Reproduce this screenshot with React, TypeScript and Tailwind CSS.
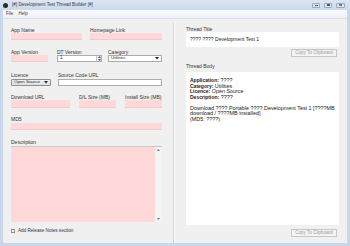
import React from "react";

const Label = ({ children, className = "" }: { children: React.ReactNode; className?: string }) => (
  <div className={`h-[6px] text-[5px] leading-[6px] text-[#333] whitespace-nowrap ${className}`}>{children}</div>
);

const Pink = ({ w, h = "h-[7px]" }: { w: string; h?: string }) => (
  <div className={`${w} ${h} bg-[#ffd9d9] border-b border-[#f3caca]`} />
);

const Arrow = () => (
  <svg width="4" height="3" viewBox="0 0 4 3" className="shrink-0">
    <path d="M0 0 L4 0 L2 2.5 Z" fill="#222" />
  </svg>
);

const CopyBtn = () => (
  <div className="w-[46px] h-[8px] border border-[#c6c6c6] bg-[#f4f4f4] flex items-center justify-center text-[4.6px] leading-none text-[#9a9a9a] whitespace-nowrap">
    Copy To Clipboard
  </div>
);

export default function App() {
  return (
    <div
      className="w-[350px] h-[246px] flex flex-col bg-[#c8d7eb] overflow-hidden"
      style={{ fontFamily: '"Liberation Sans", Arial, sans-serif' }}
    >
      {/* Title bar */}
      <div className="h-[10px] flex items-center px-[3px] bg-gradient-to-b from-[#dde7f4] to-[#cbd9ec]">
        <div className="w-[5px] h-[5px] rounded-full bg-[#2a2a2a] mr-[4px]" />
        <div className="text-[4.6px] leading-none text-[#3a3a3a] whitespace-nowrap">
          [#] Development Test Thread Builder [#]
        </div>
        <div className="ml-auto flex items-center gap-[4px] mr-[2px]">
          <div className="w-[8px] h-[5px] rounded-[1px] border border-[#9aa8bb] bg-[#dfe6f0] flex items-end justify-center pb-[1px]">
            <div className="w-[3px] h-[1px] bg-[#555]" />
          </div>
          <div className="w-[8px] h-[5px] rounded-[1px] border border-[#9aa8bb] bg-[#dfe6f0] flex items-center justify-center">
            <div className="w-[3px] h-[2px] border border-[#555]" />
          </div>
          <div className="w-[9px] h-[5px] rounded-[1px] border border-[#9aa8bb] bg-[#dfe6f0] flex items-center justify-center">
            <div className="w-[3px] h-[2px] border border-[#777]" />
          </div>
        </div>
      </div>

      <div className="flex-1 flex flex-col px-[3px] pb-[3px] min-h-0">
        {/* Menu */}
        <div className="h-[9px] flex items-center gap-[5px] pl-[3px] bg-gradient-to-b from-[#f8fafd] to-[#eef2f8] border-b border-[#d8dfe9] text-[4.6px] text-[#444]">
          <span>File</span>
          <span>Help</span>
        </div>

        {/* Main */}
        <div className="flex-1 flex bg-[#f0f0f0] min-h-0">
          {/* Left panel */}
          <div className="w-[170px] flex flex-col pl-[8px] pr-[11px] pt-[8px] pb-[6px]">
            <div className="flex gap-[8px]">
              <div className="flex flex-col">
                <Label>App Name</Label>
                <Pink w="w-[71px]" />
              </div>
              <div className="flex flex-col">
                <Label>Homepage Link</Label>
                <Pink w="w-[72px]" />
              </div>
            </div>
            <div className="flex mt-[9px]">
              <div className="flex flex-col">
                <Label>App Version</Label>
                <Pink w="w-[37px]" />
              </div>
              <div className="flex flex-col ml-[9px]">
                <Label>DT Version</Label>
                <div className="w-[45px] h-[7px] bg-white border border-[#abadb3] flex items-center">
                  <span className="text-[4.6px] leading-none pl-[2px] text-[#222]">1</span>
                  <div className="ml-auto w-[5px] h-full border-l border-[#c8c8c8] bg-[#f0f0f0] flex flex-col items-center justify-center gap-[0.5px]">
                    <svg width="3" height="2" viewBox="0 0 3 2"><path d="M0 2 L1.5 0 L3 2 Z" fill="#555" /></svg>
                    <svg width="3" height="2" viewBox="0 0 3 2"><path d="M0 0 L1.5 2 L3 0 Z" fill="#555" /></svg>
                  </div>
                </div>
              </div>
              <div className="flex flex-col ml-[6px]">
                <Label>Category</Label>
                <div className="w-[54px] h-[7px] bg-white border border-[#acacac] flex items-center px-[2px]">
                  <span className="text-[4.4px] leading-none text-[#222]">Utilities</span>
                  <span className="ml-auto"><Arrow /></span>
                </div>
              </div>
            </div>
            <div className="flex mt-[10px]">
              <div className="flex flex-col">
                <Label>Licence</Label>
                <div className="mt-[1px] w-[40px] h-[7px] bg-gradient-to-b from-[#f3f3f3] to-[#dedede] border border-[#8e8f8f] rounded-[1px] flex items-center px-[2px]">
                  <span className="text-[4.4px] leading-none text-[#222] whitespace-nowrap">Open Source</span>
                  <span className="ml-auto"><Arrow /></span>
                </div>
              </div>
              <div className="flex flex-col ml-[7px]">
                <Label>Source Code URL</Label>
                <div className="mt-[1px] w-[104px] h-[7px] bg-white border border-[#abadb3]" />
              </div>
            </div>
            <div className="flex mt-[8px]">
              <div className="flex flex-col">
                <Label>Download URL</Label>
                <Pink w="w-[59px]" h="h-[8px]" />
              </div>
              <div className="flex flex-col ml-[9px]">
                <Label>D/L Size (MB)</Label>
                <Pink w="w-[37px]" h="h-[8px]" />
              </div>
              <div className="flex flex-col ml-[9px]">
                <Label>Install Size (MB)</Label>
                <Pink w="w-[37px]" h="h-[8px]" />
              </div>
            </div>
            <div className="flex flex-col mt-[8px]">
              <Label>MD5</Label>
              <div className="mt-[1px]"><Pink w="w-[151px]" /></div>
            </div>
            <div className="flex flex-col mt-[9px]">
              <Label>Description</Label>
              <div className="mt-[1px] w-[151px] h-[76px] border-t border-[#c9c9c9] flex">
                <div className="flex-1 bg-[#ffd9d9]" />
                <div className="w-[7px] bg-[#f4f4f4] flex flex-col items-center justify-between py-[2px]">
                  <svg width="3" height="2" viewBox="0 0 3 2"><path d="M0 2 L1.5 0 L3 2 Z" fill="#777" /></svg>
                  <svg width="3" height="2" viewBox="0 0 3 2"><path d="M0 0 L1.5 2 L3 0 Z" fill="#777" /></svg>
                </div>
              </div>
            </div>
            <div className="flex items-center mt-[7px] gap-[3px]">
              <div className="w-[4px] h-[4px] border border-[#8f8f8f] bg-[#f6f6f6]" />
              <span className="text-[4.6px] leading-none text-[#333]">Add Release Notes section</span>
            </div>
          </div>

          {/* Divider */}
          <div className="w-[2px] mt-[4px] border-l border-[#d4d4d4] border-r border-r-[#fafafa]" />

          {/* Right panel */}
          <div className="flex-1 flex flex-col pl-[11px] pr-[8px] pt-[7px] pb-[6px] min-h-0">
            <Label>Thread Title</Label>
            <div className="h-[15px] bg-white flex items-center pl-[4px]">
              <span className="text-[5px] leading-none text-[#222]">???? ???? Development Test 1</span>
            </div>
            <div className="flex justify-end mt-[2px] pr-[2px]">
              <CopyBtn />
            </div>
            <Label className="mt-[6px]">Thread Body</Label>
            <div className="mt-[3px] flex-1 bg-white pl-[4px] pt-[6px] text-[5.4px] leading-[5.5px] text-[#222]">
              <div><b className="text-[5px]">Application:</b> ????</div>
              <div><b className="text-[5px]">Category:</b> Utilities</div>
              <div><b className="text-[5px]">Licence:</b> Open Source</div>
              <div><b className="text-[5px]">Description:</b> ????</div>
              <div className="h-[5.5px]" />
              <div>Download ???? Portable ???? Development Test 1 [????MB</div>
              <div>download / ????MB installed]</div>
              <div>(MD5: ????)</div>
            </div>
            <div className="flex justify-end mt-[4px] pr-[2px]">
              <CopyBtn />
            </div>
          </div>
        </div>
      </div>
    </div>
  );
}
